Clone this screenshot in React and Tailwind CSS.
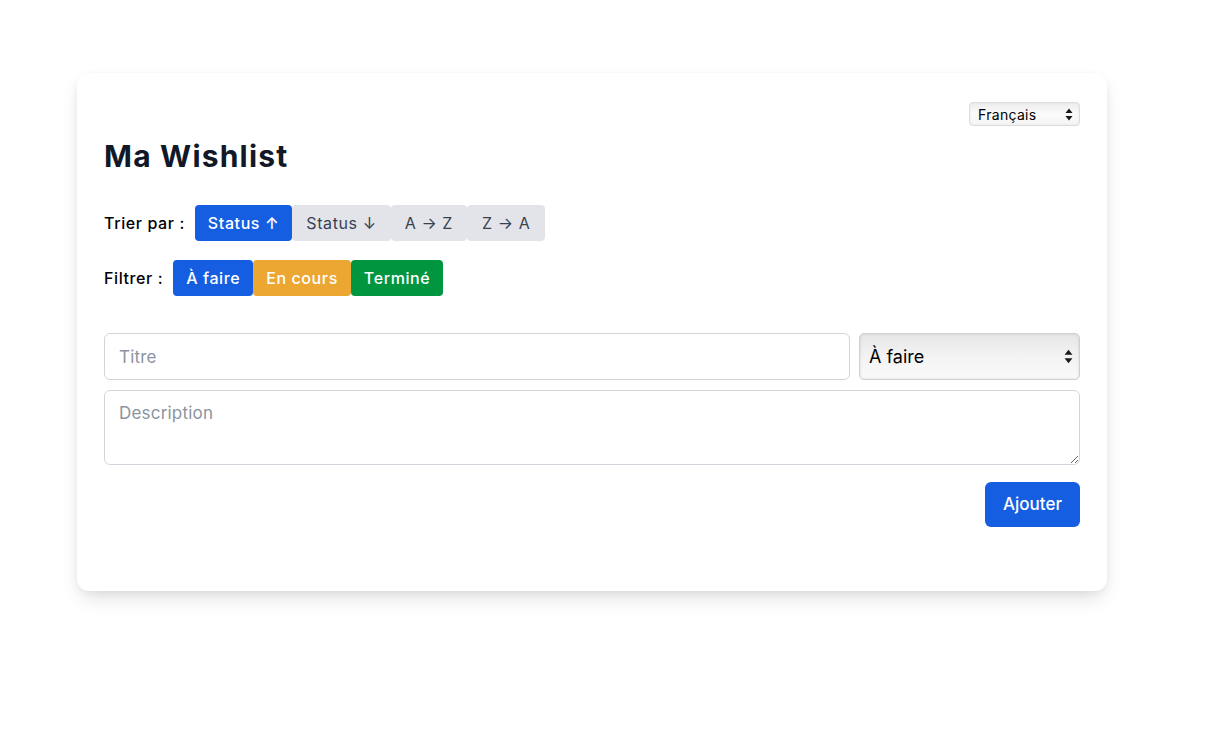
import React from "react";

function Arrows({ w = 8, h = 13 }) {
  return (
    <svg width={w} height={h} viewBox="0 0 8 13">
      <path d="M4 0.5 L7.5 5 L0.5 5 Z" fill="#1a1a1a" />
      <path d="M4 12.5 L7.5 8 L0.5 8 Z" fill="#1a1a1a" />
    </svg>
  );
}

export default function App() {
  const font = { fontFamily: "Inter, 'Noto Sans', 'Liberation Sans', sans-serif" };
  return (
    <div className="min-h-[736px] bg-white pt-[73px]" style={font}>
      <div className="ml-[77px] w-[1030px] rounded-xl bg-white px-[27px] pt-[29px] pb-[64px] shadow-[0_10px_20px_-4px_rgba(0,0,0,0.13),0_2px_8px_rgba(0,0,0,0.05)]">
        <div className="flex justify-end">
          <div className="flex h-[24px] w-[111px] items-center justify-between rounded-[4px] border border-[#dcdcdc] bg-gradient-to-b from-[#ededed] via-[#fbfbfb] to-[#f4f4f4] pl-[8px] pr-[6px] text-[14px] tracking-[0.3px] text-black shadow-[inset_0_0_2px_rgba(0,0,0,0.08)]">
            <span>Français</span>
            <Arrows />
          </div>
        </div>

        <h1 className="mt-3 text-[30px] font-bold leading-[36px] tracking-[1.2px] text-[#111827]">Ma Wishlist</h1>

        <div className="mt-[31px] flex items-center tracking-[0.6px]">
          <span className="mr-[10px] text-[16px] font-medium text-black">Trier par :</span>
          <div className="flex">
            <button className="h-[36px] rounded-[4px] bg-[#155ee2] px-[13px] text-[16px] font-medium text-white">Status ↑</button>
            <button className="h-[36px] rounded-[4px] bg-[#e2e4e9] px-[14px] text-[16px] text-[#374151]">Status ↓</button>
            <button className="h-[36px] rounded-[4px] bg-[#e2e4e9] px-[14px] text-[16px] text-[#374151]">A → Z</button>
            <button className="h-[36px] rounded-[4px] bg-[#e2e4e9] px-[15px] text-[16px] text-[#374151]">Z → A</button>
          </div>
        </div>

        <div className="mt-[19px] flex items-center tracking-[0.6px]">
          <span className="mr-[10px] text-[16px] font-medium text-black">Filtrer :</span>
          <div className="flex">
            <button className="h-[36px] rounded-[4px] bg-[#155ee2] px-[13px] text-[16px] font-medium text-white">À faire</button>
            <button className="h-[36px] rounded-[4px] bg-[#eba732] px-[13px] text-[16px] font-medium text-white">En cours</button>
            <button className="h-[36px] rounded-[4px] bg-[#00963f] px-[13px] text-[16px] font-medium text-white">Terminé</button>
          </div>
        </div>

        <form className="mt-[37px]" onSubmit={(e) => e.preventDefault()}>
          <div className="flex gap-[9px]">
            <input
              placeholder="Titre"
              className="h-[47px] flex-1 rounded-md border border-[#d1d5db] px-[14px] text-[17px] tracking-[0.2px] placeholder:text-[#8b93a1] focus:outline-none"
            />
            <div className="flex h-[47px] w-[221px] items-center justify-between rounded-[5px] border border-[#d0d0d0] bg-gradient-to-b from-[#e6e6e6] via-[#f3f3f3] to-[#fafafa] pl-[9px] pr-[6px] text-[18px] text-black shadow-[inset_0_0_3px_rgba(0,0,0,0.12)]">
              <span>À faire</span>
              <Arrows w={9} h={15} />
            </div>
          </div>
          <textarea
            placeholder="Description"
            className="mt-[10px] block h-[75px] w-full rounded-md border border-[#d1d5db] px-[14px] py-[10px] text-[17px] tracking-[0.2px] placeholder:text-[#8b93a1] focus:outline-none"
          />
          <div className="mt-[17px] flex justify-end">
            <button className="h-[45px] rounded-md bg-[#155ee2] px-[18px] text-[17px] font-medium text-white">Ajouter</button>
          </div>
        </form>
      </div>
    </div>
  );
}
